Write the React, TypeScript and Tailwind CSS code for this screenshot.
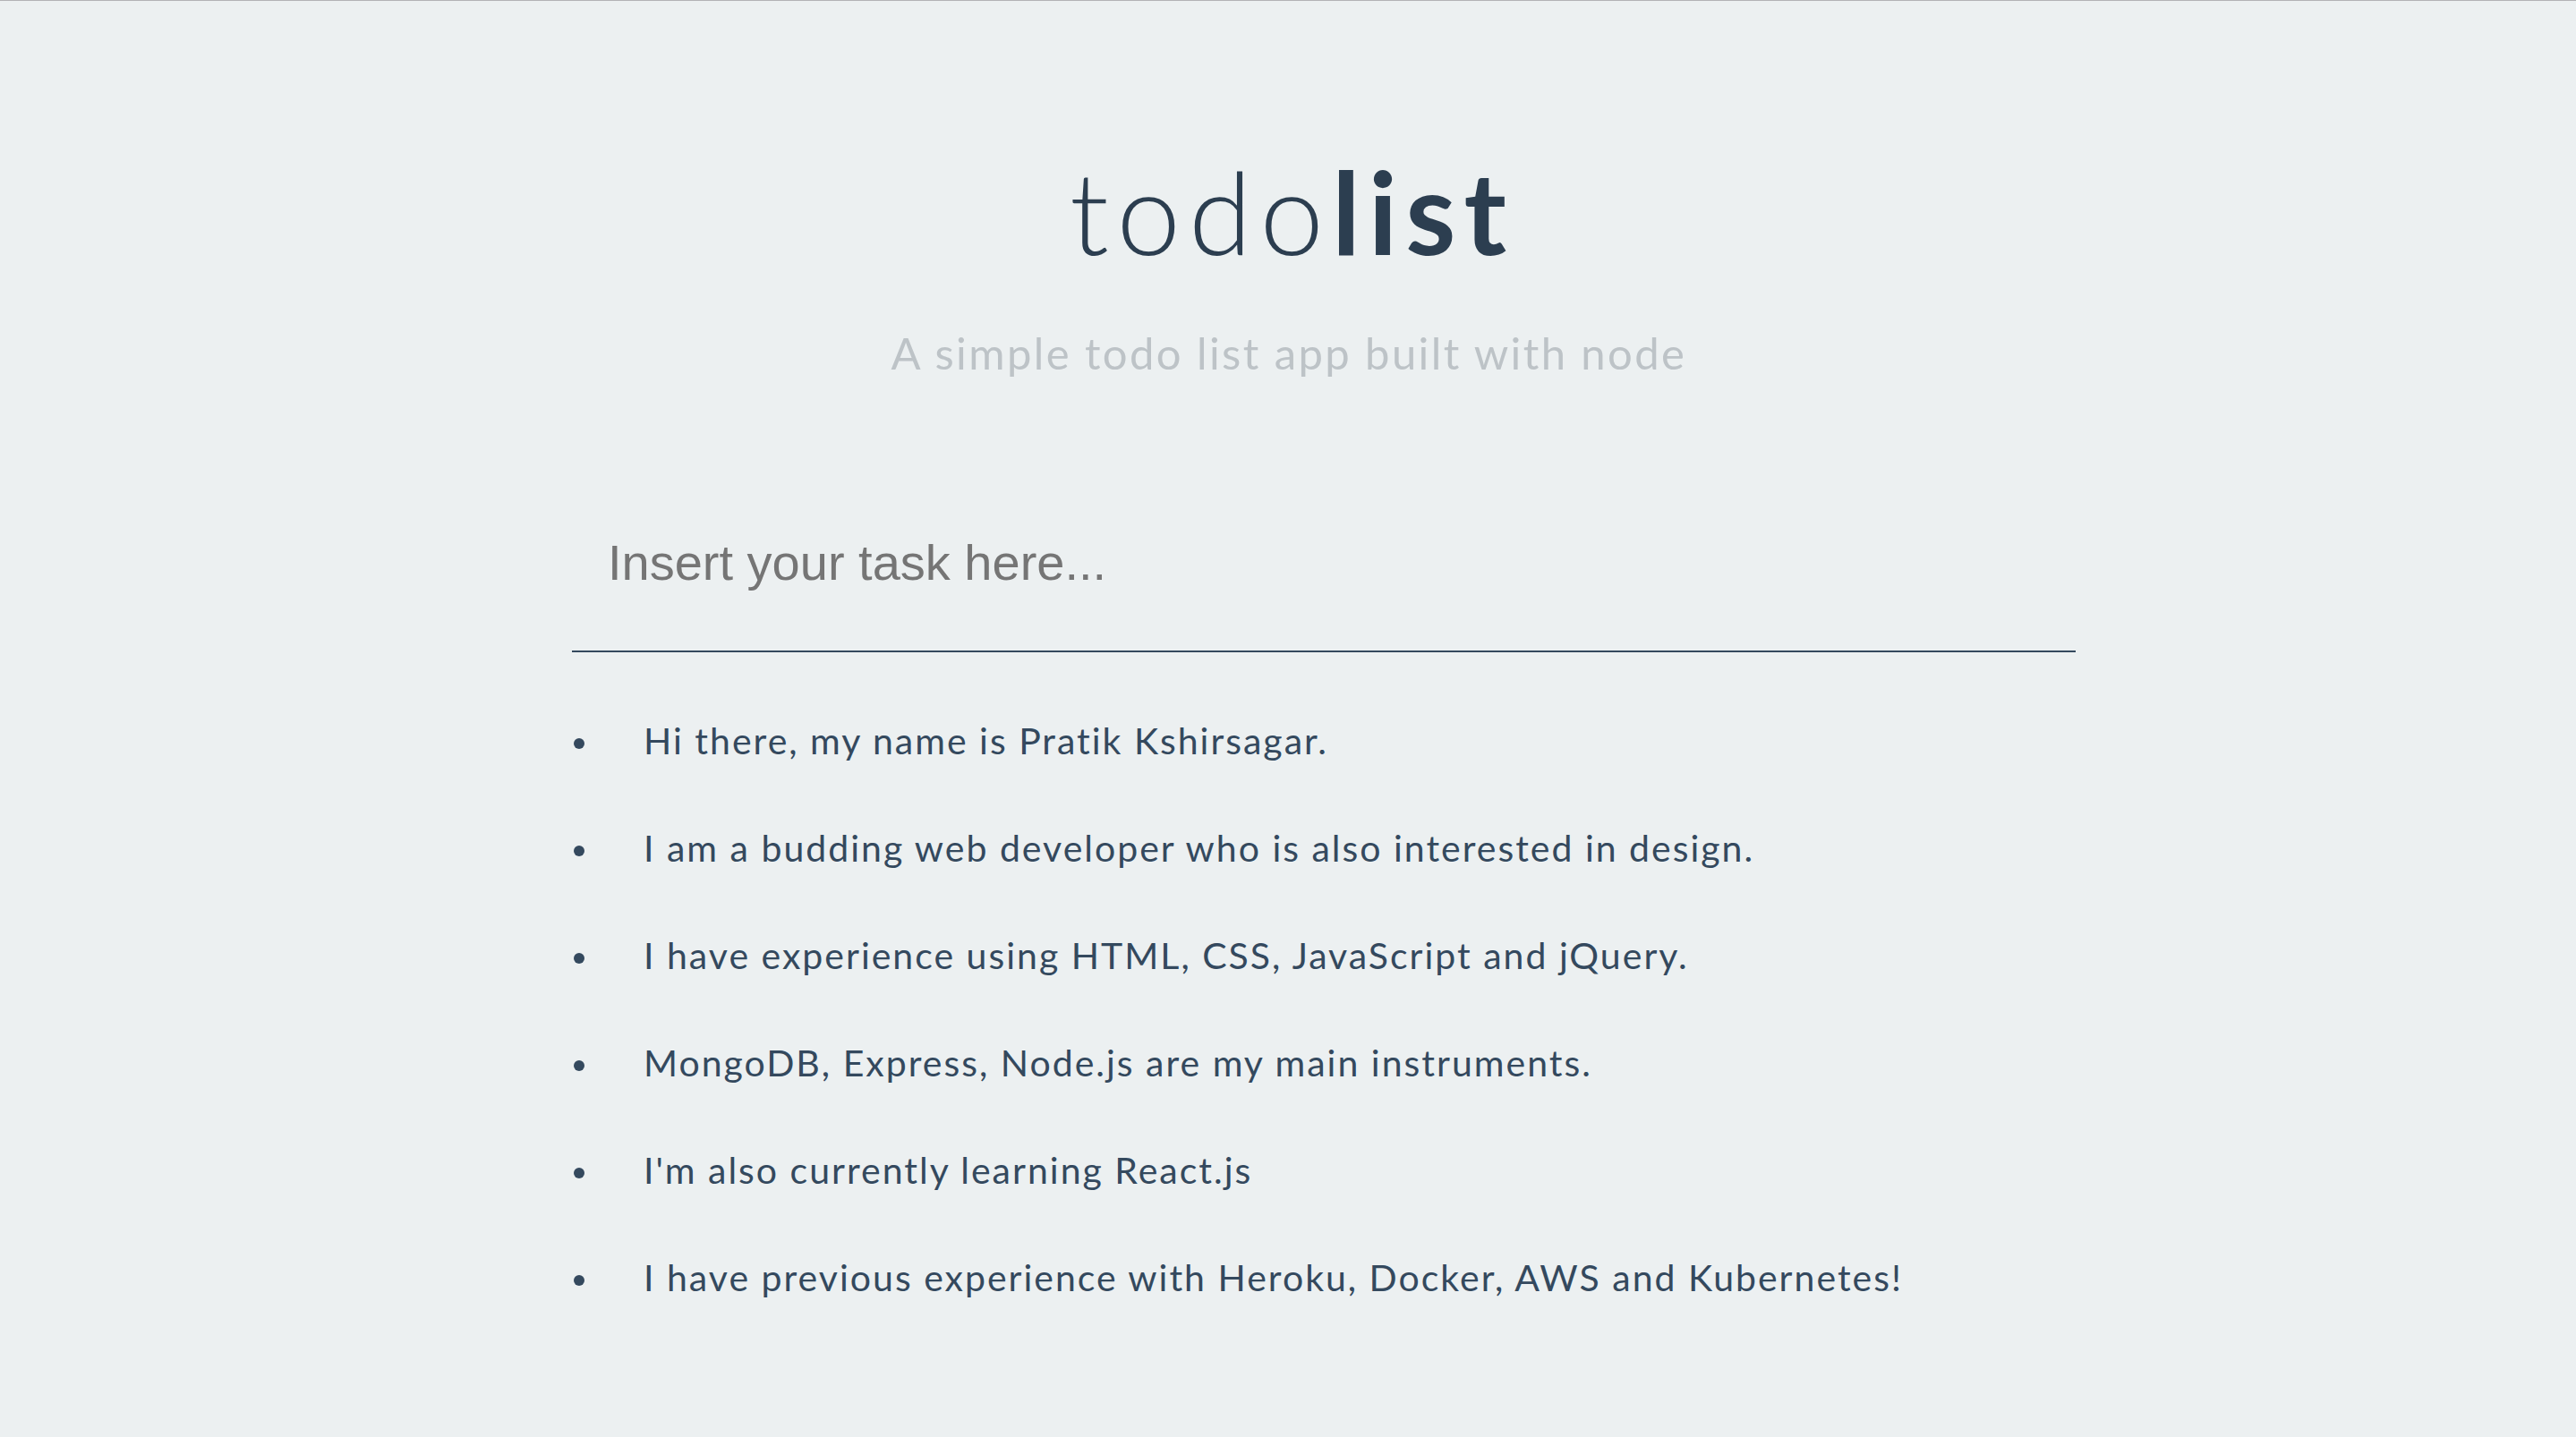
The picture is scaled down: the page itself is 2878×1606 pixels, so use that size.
import { useState } from 'react'

const items = [
  'Hi there, my name is Pratik Kshirsagar.',
  'I am a budding web developer who is also interested in design.',
  'I have experience using HTML, CSS, JavaScript and jQuery.',
  'MongoDB, Express, Node.js are my main instruments.',
  "I'm also currently learning React.js",
  'I have previous experience with Heroku, Docker, AWS and Kubernetes!',
]

export default function App() {
  const [task, setTask] = useState('')

  return (
    <div className="min-h-screen bg-[#ecf0f1] font-['Lato',sans-serif] text-[#2c3e50]">
      <div className="h-px bg-[#b3b3b6]" />

      <header className="pt-[171px] text-center">
        <h1 className="pl-[9px] text-[128px] leading-none font-light tracking-[9px]">
          todo<span className="font-bold">list</span>
        </h1>
        <p className="mt-[70px] pl-[2px] text-[49px] leading-none font-normal tracking-[2.4px] text-[#bdc3c7]">
          A simple todo list app built with node
        </p>
      </header>

      <main className="mx-auto w-[1600px]">
        <form onSubmit={e => e.preventDefault()} className="mt-[110px]">
          <input
            type="text"
            value={task}
            onChange={e => setTask(e.target.value)}
            placeholder="Insert your task here..."
            className="w-[105%] h-[200px] bg-transparent border-b-2 border-[#34495e] pl-[40px] text-[56px] text-[#2c3e50] font-['Liberation_Sans',Arial,sans-serif] placeholder:text-[#757575] outline-none"
          />
        </form>

        <ul className="mt-[38px]">
          {items.map(item => (
            <li key={item} className="flex items-center h-[120px] text-[41px] leading-none tracking-[2px] text-[#34495e]">
              <span className="ml-[2px] mt-[8px] w-[12px] h-[12px] rounded-full bg-[#34495e] shrink-0" />
              <span className="ml-[66px]">{item}</span>
            </li>
          ))}
        </ul>
      </main>
    </div>
  )
}
